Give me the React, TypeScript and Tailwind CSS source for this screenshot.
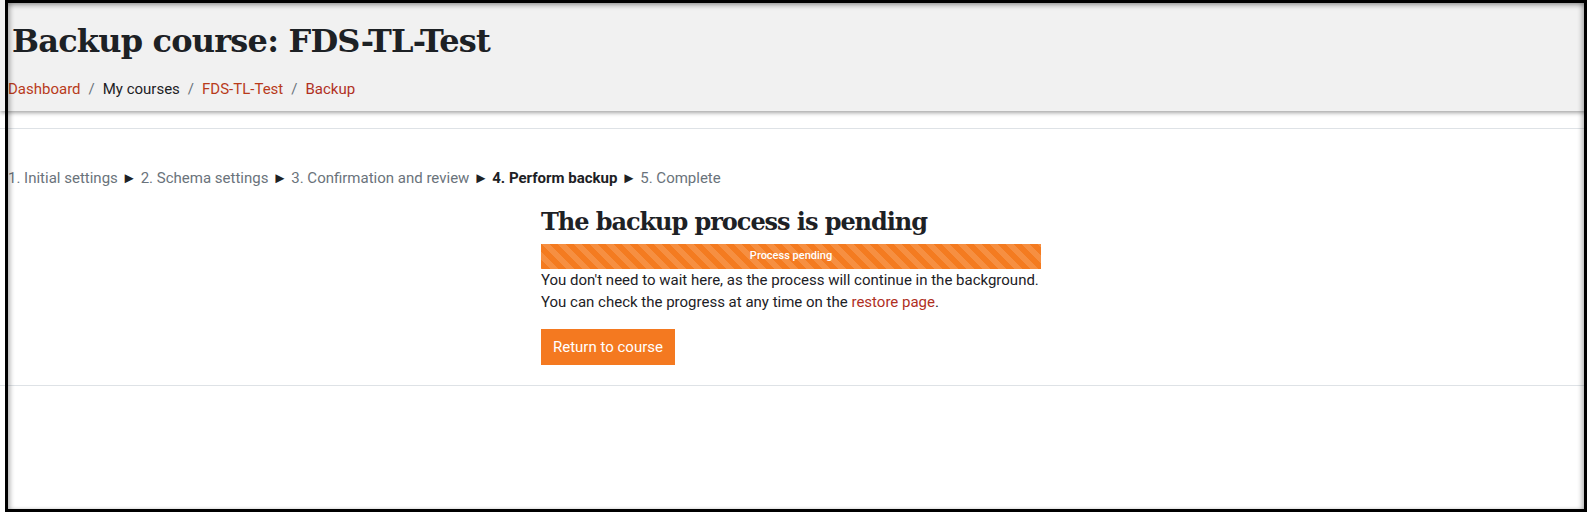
export default function App() {
  const steps = [
    { t: "1. Initial settings", cur: false },
    { t: "2. Schema settings", cur: false },
    { t: "3. Confirmation and review", cur: false },
    { t: "4. Perform backup", cur: true },
    { t: "5. Complete", cur: false },
  ];
  return (
    <div className="relative w-[1587px] h-[512px] overflow-hidden bg-white font-['Roboto',sans-serif] text-[15px] text-[#1d2125]">
      <div className="h-[111px] bg-[#f1f1f1] shadow-[0_2px_4px_rgba(0,0,0,0.35)] flex flex-col">
        <h1 className="pl-[12px] pt-[19px] font-['DejaVu_Serif',serif] font-bold text-[32px] leading-[44px] tracking-[-0.8px] text-[#1d2125]">
          Backup course: FDS-TL-Test
        </h1>
        <nav className="pl-[8px] pt-[16px] flex items-center gap-[8px] leading-[20px]">
          <a className="text-[#b83b1b]">Dashboard</a>
          <span className="text-[#6a737b]">/</span>
          <span>My courses</span>
          <span className="text-[#6a737b]">/</span>
          <a className="text-[#b83b1b]">FDS-TL-Test</a>
          <span className="text-[#6a737b]">/</span>
          <a className="text-[#b0301f]">Backup</a>
        </nav>
      </div>
      <div className="h-[18px] border-b border-[#dee2e6]" />
      <div className="pl-[8px] pt-[38px] leading-[22px] text-[#6a737b]">
        {steps.map((s, i) => (
          <span key={i}>
            {i > 0 && <span className="text-[#1d2125] px-[4px]">►</span>}
            <span className={s.cur ? "font-bold text-[#1d2125]" : ""}>{s.t}</span>
          </span>
        ))}
      </div>
      <div className="flex justify-center pr-[5px] pb-[20px] border-b border-[#dee2e6]">
        <div className="w-[500px]">
          <h2 className="pt-[17px] font-['DejaVu_Serif',serif] font-bold text-[24px] leading-[32px] tracking-[-1.05px]">
            The backup process is pending
          </h2>
          <div className="mt-[6px] h-[25px] bg-[#f47b20] bg-[linear-gradient(45deg,rgba(255,255,255,0.15)_25%,transparent_25%,transparent_50%,rgba(255,255,255,0.15)_50%,rgba(255,255,255,0.15)_75%,transparent_75%,transparent)] bg-[length:16px_16px] flex items-center justify-center text-white text-[11px] font-medium">
            Process pending
          </div>
          <p className="leading-[22px] mt-[0px]">
            You don't need to wait here, as the process will continue in the background.
          </p>
          <p className="leading-[22px]">
            You can check the progress at any time on the <a className="text-[#b0301f]">restore page</a>.
          </p>
          <button className="mt-[16px] h-[36px] px-[12px] bg-[#f47920] text-white text-[15px] leading-[22px]">
            Return to course
          </button>
        </div>
      </div>
      <div className="pointer-events-none absolute left-[5px] top-0 right-0 bottom-0 border-t-[3px] border-l-[3px] border-r-[3px] border-b-[3px] border-black shadow-[inset_0_4px_4px_-1px_rgba(0,0,0,0.25),inset_4px_0_4px_-1px_rgba(0,0,0,0.2),inset_-4px_0_4px_-1px_rgba(0,0,0,0.2)]" />
    </div>
  );
}
